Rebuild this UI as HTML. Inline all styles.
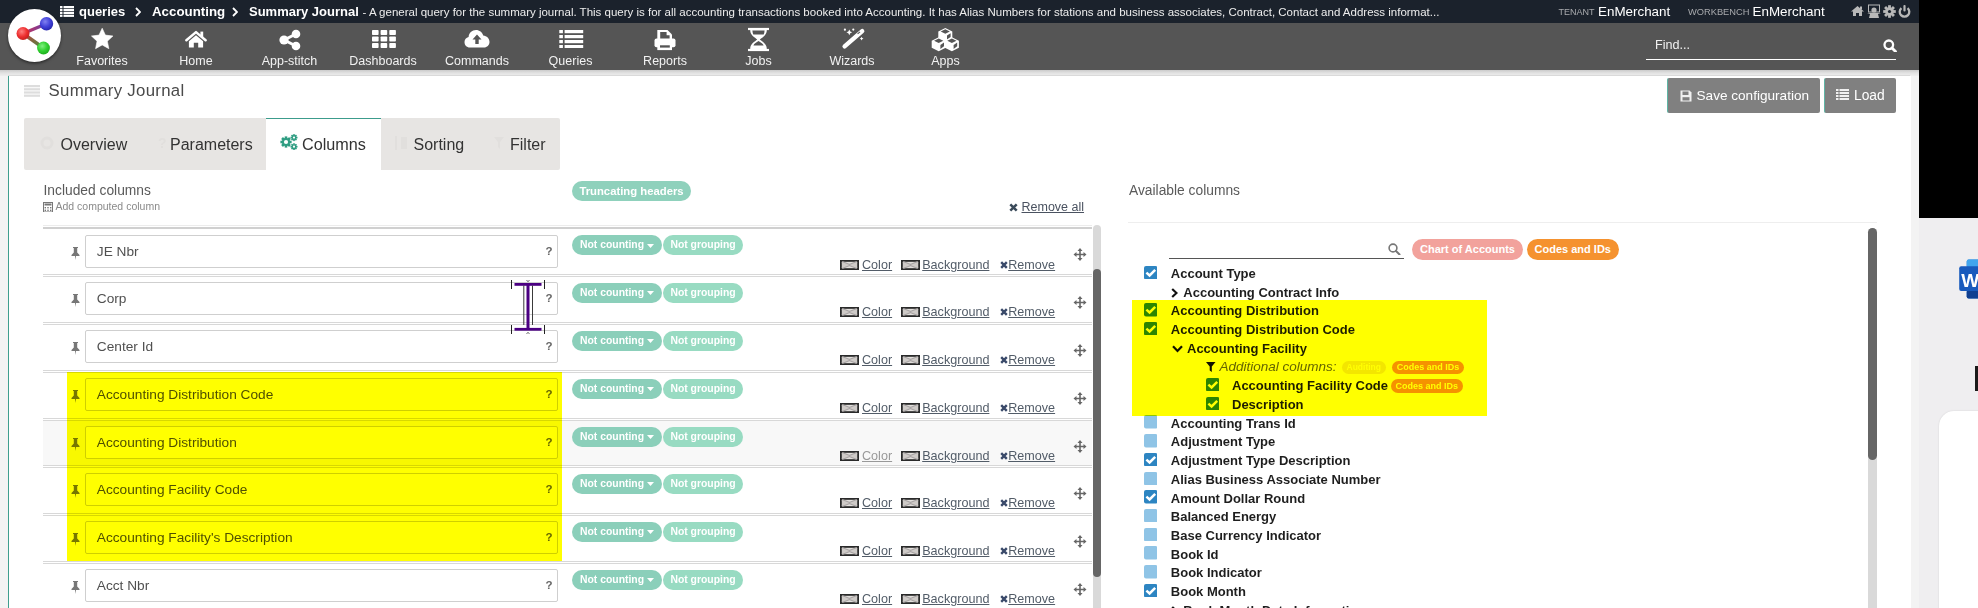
<!DOCTYPE html><html><head><meta charset="utf-8"><style>
html,body{margin:0;padding:0;}
body{width:1978px;height:608px;overflow:hidden;position:relative;background:#efeef0;font-family:"Liberation Sans", sans-serif;}
.t{position:absolute;white-space:pre;}
.r{position:absolute;}
</style></head><body>
<div class="r" style="left:1919px;top:0px;width:59px;height:218px;background:#000"></div>
<svg class="r" style="left:1958px;top:258px;" width="20" height="42" viewBox="0 0 20 42"><rect x="8.7" y="1.4" width="16" height="39" rx="2" fill="#2b7cd3"/><rect x="8.7" y="1.4" width="16" height="8" rx="2" fill="#41a5ee"/><rect x="8.7" y="32" width="16" height="8.4" rx="2" fill="#103f91"/><rect x="1.2" y="8.3" width="22" height="24.7" rx="2" fill="#185abd"/><text x="3.2" y="28.5" font-family="Liberation Sans" font-weight="bold" font-size="19" fill="#fff">W</text></svg>
<div class="r" style="left:1975px;top:366px;width:3px;height:25px;background:#1a1a1a"></div>
<div class="r" style="left:1939px;top:411px;width:60px;height:220px;background:#fff;border-radius:15px 0 0 0;box-shadow:0 0 2px rgba(0,0,0,0.12)"></div>
<div class="r" style="left:0;top:0;width:1919px;height:608px;overflow:hidden;background:#f3f3f3">
<div class="r" style="left:0px;top:0px;width:1919px;height:23px;background:#1b222c"></div>
<div class="r" style="left:0px;top:23px;width:1919px;height:47px;background:#555555"></div>
<div class="r" style="left:0px;top:70px;width:1919px;height:6px;background:linear-gradient(#cbcbcb,#e2e2e2 50%,#eeeeee)"></div>
<div class="r" style="left:8px;top:75px;width:1902px;height:1.2px;background:#dadada"></div>
<div class="r" style="left:8px;top:76px;width:1902px;height:540px;background:#fff;border-left:1px solid #3f9e8e"></div>
<svg class="r" style="left:59.5px;top:6.3px;" width="14" height="11" viewBox="0 0 14 11"><rect x="0" y="0" width="2.5" height="2.2" fill="#fff"/><rect x="3.5" y="0" width="10.5" height="2.2" fill="#fff"/><rect x="0" y="2.9" width="2.5" height="2.2" fill="#fff"/><rect x="3.5" y="2.9" width="10.5" height="2.2" fill="#fff"/><rect x="0" y="5.8" width="2.5" height="2.2" fill="#fff"/><rect x="3.5" y="5.8" width="10.5" height="2.2" fill="#fff"/><rect x="0" y="8.7" width="2.5" height="2.2" fill="#fff"/><rect x="3.5" y="8.7" width="10.5" height="2.2" fill="#fff"/></svg>
<div class="t" style="left:79px;top:5.00px;font-size:13px;line-height:13px;color:#fff;font-weight:bold;font-style:normal;">queries</div>
<svg class="r" style="left:135px;top:7px;" width="6" height="10" viewBox="0 0 6 10"><path d="M1 1 L5 5 L1 9" stroke="#fff" stroke-width="1.8" fill="none"/></svg>
<div class="t" style="left:152px;top:4.74px;font-size:13.3px;line-height:13.3px;color:#fff;font-weight:bold;font-style:normal;">Accounting</div>
<svg class="r" style="left:232px;top:7px;" width="6" height="10" viewBox="0 0 6 10"><path d="M1 1 L5 5 L1 9" stroke="#fff" stroke-width="1.8" fill="none"/></svg>
<div class="t" style="left:249px;top:5.00px;font-size:13px;line-height:13px;color:#fff;font-weight:bold;font-style:normal;">Summary Journal</div>
<div class="t" style="left:362.5px;top:7.07px;font-size:11.5px;line-height:11.5px;color:#ededed;font-weight:normal;font-style:normal;">- A general query for the summary journal. This query is for all accounting transactions booked into Accounting. It has Alias Numbers for stations and business associates, Contract, Contact and Address informat...</div>
<div class="t" style="left:1558.5px;top:8.18px;font-size:9px;line-height:9px;color:#a9abae;font-weight:normal;font-style:normal;">TENANT</div>
<div class="t" style="left:1598px;top:4.66px;font-size:13.4px;line-height:13.4px;color:#fff;font-weight:normal;font-style:normal;">EnMerchant</div>
<div class="t" style="left:1688px;top:7.93px;font-size:9.3px;line-height:9.3px;color:#a9abae;font-weight:normal;font-style:normal;">WORKBENCH</div>
<div class="t" style="left:1752.5px;top:4.66px;font-size:13.4px;line-height:13.4px;color:#fff;font-weight:normal;font-style:normal;">EnMerchant</div>
<svg class="r" style="left:1851px;top:6px;" width="13" height="10" viewBox="0 0 13 10"><path d="M6.5 0 L13 5.5 L11 5.5 L11 10 L8 10 L8 7 L5 7 L5 10 L2 10 L2 5.5 L0 5.5 Z" fill="#b8b8b8"/><rect x="9" y="0.5" width="2" height="3" fill="#b8b8b8"/></svg>
<svg class="r" style="left:1867px;top:4px;" width="14" height="14" viewBox="0 0 14 14"><rect x="1.5" y="1" width="11" height="7" fill="none" stroke="#b8b8b8" stroke-width="1"/><circle cx="7" cy="6" r="2.6" fill="#b8b8b8"/><path d="M0 9 L14 9 L11 10 L3 10Z" fill="#b8b8b8"/><path d="M2 14 L3 10 L11 10 L12 14Z" fill="#b8b8b8"/></svg>
<svg class="r" style="left:1883px;top:5px;" width="13" height="13" viewBox="0 0 13 13"><g transform="translate(6.5,6.5)"><rect x="-1.4" y="-6.3" width="2.8" height="3" fill="#b8b8b8" transform="rotate(0)"/><rect x="-1.4" y="-6.3" width="2.8" height="3" fill="#b8b8b8" transform="rotate(45)"/><rect x="-1.4" y="-6.3" width="2.8" height="3" fill="#b8b8b8" transform="rotate(90)"/><rect x="-1.4" y="-6.3" width="2.8" height="3" fill="#b8b8b8" transform="rotate(135)"/><rect x="-1.4" y="-6.3" width="2.8" height="3" fill="#b8b8b8" transform="rotate(180)"/><rect x="-1.4" y="-6.3" width="2.8" height="3" fill="#b8b8b8" transform="rotate(225)"/><rect x="-1.4" y="-6.3" width="2.8" height="3" fill="#b8b8b8" transform="rotate(270)"/><rect x="-1.4" y="-6.3" width="2.8" height="3" fill="#b8b8b8" transform="rotate(315)"/><circle r="4.2" fill="#b8b8b8"/><circle r="1.6" fill="#1b222c"/></g></svg>
<svg class="r" style="left:1898px;top:5px;" width="13" height="13" viewBox="0 0 13 13"><path d="M3.4 3.2 A4.8 4.8 0 1 0 9.6 3.2" fill="none" stroke="#b8b8b8" stroke-width="2.3"/><rect x="5.4" y="0" width="2.2" height="6.5" rx="1" fill="#b8b8b8"/></svg>
<div class="t" style="left:52px;width:100px;text-align:center;top:54.72px;font-size:12.5px;line-height:12.5px;color:#f2f2f2">Favorites</div>
<div class="t" style="left:146px;width:100px;text-align:center;top:54.72px;font-size:12.5px;line-height:12.5px;color:#f2f2f2">Home</div>
<div class="t" style="left:239.5px;width:100px;text-align:center;top:54.72px;font-size:12.5px;line-height:12.5px;color:#f2f2f2">App-stitch</div>
<div class="t" style="left:333px;width:100px;text-align:center;top:54.72px;font-size:12.5px;line-height:12.5px;color:#f2f2f2">Dashboards</div>
<div class="t" style="left:427px;width:100px;text-align:center;top:54.72px;font-size:12.5px;line-height:12.5px;color:#f2f2f2">Commands</div>
<div class="t" style="left:520.5px;width:100px;text-align:center;top:54.72px;font-size:12.5px;line-height:12.5px;color:#f2f2f2">Queries</div>
<div class="t" style="left:615px;width:100px;text-align:center;top:54.72px;font-size:12.5px;line-height:12.5px;color:#f2f2f2">Reports</div>
<div class="t" style="left:708.5px;width:100px;text-align:center;top:54.72px;font-size:12.5px;line-height:12.5px;color:#f2f2f2">Jobs</div>
<div class="t" style="left:802px;width:100px;text-align:center;top:54.72px;font-size:12.5px;line-height:12.5px;color:#f2f2f2">Wizards</div>
<div class="t" style="left:895.5px;width:100px;text-align:center;top:54.72px;font-size:12.5px;line-height:12.5px;color:#f2f2f2">Apps</div>
<svg class="r" style="left:91px;top:28px;" width="23" height="22" viewBox="0 0 23 22"><path d="M11.20 0.22 L14.38 7.12 L21.93 8.01 L16.35 13.17 L17.83 20.63 L11.20 16.91 L4.57 20.63 L6.05 13.17 L0.47 8.01 L8.02 7.12Z" fill="#fff" stroke="#fff" stroke-width="0.6" stroke-linejoin="round"/></svg>
<svg class="r" style="left:185px;top:30px;" width="22" height="18" viewBox="0 0 22 18"><path d="M1.4 10.2 L11 2.1 L20.6 10.2" stroke="#fff" stroke-width="2.5" stroke-linecap="round" stroke-linejoin="round" fill="none"/><rect x="15.4" y="1.6" width="2.8" height="5.5" fill="#fff"/><path d="M3.9 11.3 L11 5.2 L18.1 11.3 L18.1 17.6 L13.2 17.6 L13.2 12.7 L8.8 12.7 L8.8 17.6 L3.9 17.6 Z" fill="#fff"/></svg>
<svg class="r" style="left:279px;top:29px;" width="22" height="22" viewBox="0 0 22 22"><circle cx="17" cy="5" r="4.3" fill="#fff"/><circle cx="5" cy="11" r="4.6" fill="#fff"/><circle cx="17" cy="17" r="4.3" fill="#fff"/><path d="M5 11 L17 5 M5 11 L17 17" stroke="#fff" stroke-width="3"/></svg>
<svg class="r" style="left:372px;top:30px;" width="24" height="18" viewBox="0 0 24 18"><rect x="0" y="0" width="6.6" height="5" rx="0.8" fill="#fff"/><rect x="0" y="6.5" width="6.6" height="5" rx="0.8" fill="#fff"/><rect x="0" y="13" width="6.6" height="5" rx="0.8" fill="#fff"/><rect x="8.6" y="0" width="6.6" height="5" rx="0.8" fill="#fff"/><rect x="8.6" y="6.5" width="6.6" height="5" rx="0.8" fill="#fff"/><rect x="8.6" y="13" width="6.6" height="5" rx="0.8" fill="#fff"/><rect x="17.3" y="0" width="6.6" height="5" rx="0.8" fill="#fff"/><rect x="17.3" y="6.5" width="6.6" height="5" rx="0.8" fill="#fff"/><rect x="17.3" y="13" width="6.6" height="5" rx="0.8" fill="#fff"/></svg>
<svg class="r" style="left:464px;top:29px;" width="26" height="19" viewBox="0 0 26 19"><path d="M6 18.5 C2.5 18.5 0.5 16 0.5 13 C0.5 10.5 2.2 8.5 4.6 8 C4.8 4 8 1 12 1 C15.5 1 18.3 3.3 19.2 6.5 C22.8 6.8 25.5 9.5 25.5 13 C25.5 16 23 18.5 20 18.5 Z" fill="#fff"/><path d="M13 5.5 L8.5 10.5 L11.3 10.5 L11.3 15 L14.7 15 L14.7 10.5 L17.5 10.5 Z" fill="#555"/></svg>
<svg class="r" style="left:559px;top:30px;" width="25" height="18" viewBox="0 0 25 18"><rect x="0.3" y="0" width="3.6" height="3.2" fill="#fff"/><rect x="5.6" y="0" width="18.6" height="3.2" fill="#fff"/><rect x="0.3" y="5" width="3.6" height="3.2" fill="#fff"/><rect x="5.6" y="5" width="18.6" height="3.2" fill="#fff"/><rect x="0.3" y="10" width="3.6" height="3.2" fill="#fff"/><rect x="5.6" y="10" width="18.6" height="3.2" fill="#fff"/><rect x="0.3" y="15" width="3.6" height="3.2" fill="#fff"/><rect x="5.6" y="15" width="18.6" height="3.2" fill="#fff"/></svg>
<svg class="r" style="left:654px;top:30px;" width="22" height="21" viewBox="0 0 22 21"><path d="M3.3 0 L13.5 0 L18 4.5 L18 9.5 L3.3 9.5 Z" fill="#fff"/><path d="M6.2 2.1 L12.6 2.1 L12.6 5.2 L15.6 5.2 L15.6 9.5 L6.2 9.5 Z" fill="#555"/><rect x="0.5" y="8.6" width="21" height="8.6" rx="2" fill="#fff"/><rect x="3.3" y="14.5" width="14.7" height="5.6" fill="#fff"/><rect x="6" y="15.3" width="9.8" height="2.3" fill="#555"/></svg>
<svg class="r" style="left:747px;top:27px;" width="23" height="25" viewBox="0 0 23 25"><rect x="1" y="0.9" width="21" height="2.2" fill="#fff"/><rect x="1" y="21.9" width="21" height="2.2" fill="#fff"/><path d="M3.2 3 L19.8 3 C19.8 8.5 15.2 10.3 12.8 12.5 C15.2 14.7 19.8 16.5 19.8 22 L3.2 22 C3.2 16.5 7.8 14.7 10.2 12.5 C7.8 10.3 3.2 8.5 3.2 3 Z" fill="#fff"/><path d="M5.4 3.4 L17.6 3.4 C17.5 5 17.2 6.2 16.7 7.4 L6.3 7.4 C5.8 6.2 5.5 5 5.4 3.4Z" fill="#555"/><path d="M11.5 14 C13.5 15.2 15.8 16.3 16.6 18.6 L6.4 18.6 C7.2 16.3 9.5 15.2 11.5 14Z" fill="#555"/></svg>
<svg class="r" style="left:835px;top:24px;" width="40" height="30" viewBox="0 0 40 30"><path d="M9.6 22.4 L27.2 7.1" stroke="#fff" stroke-width="4.4" stroke-linecap="round"/><path d="M22.6 9.9 L25.0 7.8" stroke="#555" stroke-width="1.1"/><path d="M14.3 5.4 Q14.8 7.800000000000001 17.2 8.3 Q14.8 8.8 14.3 11.200000000000001 Q13.8 8.8 11.4 8.3 Q13.8 7.800000000000001 14.3 5.4Z" fill="#fff"/><path d="M26.6 12.7 Q26.950000000000003 14.25 28.5 14.6 Q26.950000000000003 14.95 26.6 16.5 Q26.25 14.95 24.700000000000003 14.6 Q26.25 14.25 26.6 12.7Z" fill="#fff"/><circle cx="9.9" cy="5.7" r="1.1" fill="#fff"/><circle cx="18.3" cy="5.6" r="1.1" fill="#fff"/></svg>
<svg class="r" style="left:925px;top:24px;" width="40" height="30" viewBox="0 0 40 30"><path d="M20.3 4.0 L27.3 7.5 L27.3 14.5 L20.3 18.0 L13.3 14.5 L13.3 7.5 Z" fill="#fff"/><path d="M20.3 5.3 L24.900000000000002 7.5 L20.3 9.7 L15.700000000000001 7.5 Z" fill="#555"/><path d="M22.0 11.6 L25.6 9.3 L25.6 12.9 L22.0 15.6 Z" fill="#555"/><path d="M13.7 13.3 L20.7 16.8 L20.7 23.8 L13.7 27.3 L6.699999999999999 23.8 L6.699999999999999 16.8 Z" fill="#fff"/><path d="M13.7 14.600000000000001 L18.3 16.8 L13.7 19.0 L9.1 16.8 Z" fill="#555"/><path d="M15.399999999999999 20.900000000000002 L19.0 18.6 L19.0 22.2 L15.399999999999999 24.900000000000002 Z" fill="#555"/><path d="M26.9 13.3 L33.9 16.8 L33.9 23.8 L26.9 27.3 L19.9 23.8 L19.9 16.8 Z" fill="#fff"/><path d="M26.9 14.600000000000001 L31.5 16.8 L26.9 19.0 L22.299999999999997 16.8 Z" fill="#555"/><path d="M28.599999999999998 20.900000000000002 L32.199999999999996 18.6 L32.199999999999996 22.2 L28.599999999999998 24.900000000000002 Z" fill="#555"/></svg>
<div class="t" style="left:1655px;top:39.33px;font-size:12.6px;line-height:12.6px;color:#f2f2f2;font-weight:normal;font-style:normal;">Find...</div>
<div class="r" style="left:1646px;top:59px;width:250px;height:1px;background:#fff"></div>
<svg class="r" style="left:1883px;top:39px;" width="14" height="13" viewBox="0 0 14 13"><circle cx="5.8" cy="5.8" r="4.3" fill="none" stroke="#fff" stroke-width="2.3"/><path d="M9 9 L12.5 12.5" stroke="#fff" stroke-width="2.8" stroke-linecap="round"/></svg>
<div class="r" style="left:8px;top:8.5px;width:53px;height:53px;border-radius:50%;background:#fff;box-shadow:0 1.5px 3px rgba(0,0,0,0.5)"></div>
<svg class="r" style="left:14px;top:15px;" width="44" height="44" viewBox="0 0 44 44"><defs><radialGradient id="gr" cx="40%" cy="35%" r="65%"><stop offset="0" stop-color="#ff8080"/><stop offset="0.6" stop-color="#ee3030"/><stop offset="1" stop-color="#c82020"/></radialGradient><radialGradient id="gb" cx="40%" cy="35%" r="65%"><stop offset="0" stop-color="#8080f0"/><stop offset="0.6" stop-color="#4040d8"/><stop offset="1" stop-color="#2828b0"/></radialGradient><radialGradient id="gg" cx="40%" cy="35%" r="65%"><stop offset="0" stop-color="#80f080"/><stop offset="0.6" stop-color="#30d030"/><stop offset="1" stop-color="#20b020"/></radialGradient><linearGradient id="l1" x1="0" y1="0" x2="1" y2="0"><stop offset="0" stop-color="#d03050"/><stop offset="1" stop-color="#6040b0"/></linearGradient><linearGradient id="l2" x1="0" y1="0" x2="1" y2="1"><stop offset="0" stop-color="#c04040"/><stop offset="1" stop-color="#409040"/></linearGradient><filter id="bl"><feGaussianBlur stdDeviation="0.45"/></filter></defs><g filter="url(#bl)"><path d="M9 18.5 L32.5 8.7" stroke="url(#l1)" stroke-width="3.4"/><path d="M9 18.5 L29.5 33" stroke="url(#l2)" stroke-width="3.4"/><circle cx="9" cy="18.5" r="6.5" fill="url(#gr)"/><circle cx="32.5" cy="8.7" r="6.7" fill="url(#gb)"/><circle cx="29.5" cy="33" r="6.4" fill="url(#gg)"/></g></svg>
<svg class="r" style="left:24px;top:85px;" width="16" height="12" viewBox="0 0 16 12"><rect x="0" y="0" width="16" height="2.2" fill="#dddddd"/><rect x="0" y="3.2" width="16" height="2.2" fill="#dddddd"/><rect x="0" y="6.4" width="16" height="2.2" fill="#dddddd"/><rect x="0" y="9.6" width="16" height="2.2" fill="#dddddd"/></svg>
<div class="t" style="left:48.5px;top:83.28px;font-size:16.8px;line-height:16.8px;color:#4a4a4a;font-weight:normal;font-style:normal;letter-spacing:0.3px;">Summary Journal</div>
<div class="r" style="left:1667px;top:78px;width:153px;height:35px;background:#808080;border-left:1px solid #5fb5a5;border-radius:2px;box-sizing:border-box"></div>
<svg class="r" style="left:1680px;top:90px;" width="12" height="12" viewBox="0 0 12 12"><path d="M0.5 0.5 L9.5 0.5 L11.5 2.5 L11.5 11.5 L0.5 11.5 Z" fill="#f0f0f0"/><rect x="2.5" y="1.5" width="6" height="3.5" fill="#808080"/><rect x="2.5" y="7.2" width="7" height="3.3" fill="#808080"/></svg>
<div class="t" style="left:1696.5px;top:88.99px;font-size:13.6px;line-height:13.6px;color:#fff;font-weight:normal;font-style:normal;">Save configuration</div>
<div class="r" style="left:1823.5px;top:78px;width:72.5px;height:35px;background:#808080;border-left:1px solid #5fb5a5;border-radius:2px;box-sizing:border-box"></div>
<svg class="r" style="left:1836px;top:89px;" width="13" height="11" viewBox="0 0 13 11"><rect x="0" y="0" width="2.5" height="2" fill="#f0f0f0"/><rect x="3.5" y="0" width="9.5" height="2" fill="#f0f0f0"/><rect x="0" y="3" width="2.5" height="2" fill="#f0f0f0"/><rect x="3.5" y="3" width="9.5" height="2" fill="#f0f0f0"/><rect x="0" y="6" width="2.5" height="2" fill="#f0f0f0"/><rect x="3.5" y="6" width="9.5" height="2" fill="#f0f0f0"/><rect x="0" y="9" width="2.5" height="2" fill="#f0f0f0"/><rect x="3.5" y="9" width="9.5" height="2" fill="#f0f0f0"/></svg>
<div class="t" style="left:1854px;top:88.82px;font-size:13.8px;line-height:13.8px;color:#fff;font-weight:normal;font-style:normal;">Load</div>
<div class="r" style="left:24px;top:118px;width:536px;height:52px;background:#e7e5e3;border-radius:2px"></div>
<div class="r" style="left:265.5px;top:118px;width:115px;height:52px;background:#fff;border-top:1.5px solid #3c9c8c;box-sizing:border-box"></div>
<div class="t" style="left:60.5px;top:136.76px;font-size:16px;line-height:16px;color:#333;font-weight:normal;font-style:normal;">Overview</div>
<div class="t" style="left:170px;top:136.76px;font-size:16px;line-height:16px;color:#333;font-weight:normal;font-style:normal;">Parameters</div>
<div class="t" style="left:302px;top:136.19px;font-size:16.2px;line-height:16.2px;color:#333;font-weight:normal;font-style:normal;">Columns</div>
<div class="t" style="left:413.5px;top:136.76px;font-size:16px;line-height:16px;color:#333;font-weight:normal;font-style:normal;">Sorting</div>
<div class="t" style="left:510px;top:136.76px;font-size:16px;line-height:16px;color:#333;font-weight:normal;font-style:normal;">Filter</div>
<svg class="r" style="left:40px;top:135px;" width="16" height="16" viewBox="0 0 16 16"><circle cx="7" cy="8" r="5" fill="none" stroke="#e1dfdd" stroke-width="3"/></svg>
<svg class="r" style="left:158px;top:136px;" width="8" height="14" viewBox="0 0 8 14"><text x="0" y="12" font-family="Liberation Sans" font-weight="bold" font-size="14" fill="#e1dfdd">?</text></svg>
<svg class="r" style="left:394px;top:135px;" width="14" height="16" viewBox="0 0 14 16"><rect x="1" y="1" width="2" height="14" fill="#e1dfdd"/><rect x="7" y="2" width="6" height="12" fill="#e1dfdd"/></svg>
<svg class="r" style="left:494px;top:137px;" width="10" height="12" viewBox="0 0 10 12"><path d="M0 0 L10 0 L6 5 L6 12 L4 10 L4 5Z" fill="#e1dfdd"/></svg>
<svg class="r" style="left:280px;top:134px;" width="18" height="16" viewBox="0 0 18 16"><g transform="translate(6,8)"><rect x="-1.3" y="-5.6" width="2.6" height="2.6" fill="#2f9d82" transform="rotate(0)"/><rect x="-1.3" y="-5.6" width="2.6" height="2.6" fill="#2f9d82" transform="rotate(45)"/><rect x="-1.3" y="-5.6" width="2.6" height="2.6" fill="#2f9d82" transform="rotate(90)"/><rect x="-1.3" y="-5.6" width="2.6" height="2.6" fill="#2f9d82" transform="rotate(135)"/><rect x="-1.3" y="-5.6" width="2.6" height="2.6" fill="#2f9d82" transform="rotate(180)"/><rect x="-1.3" y="-5.6" width="2.6" height="2.6" fill="#2f9d82" transform="rotate(225)"/><rect x="-1.3" y="-5.6" width="2.6" height="2.6" fill="#2f9d82" transform="rotate(270)"/><rect x="-1.3" y="-5.6" width="2.6" height="2.6" fill="#2f9d82" transform="rotate(315)"/><circle r="4" fill="#2f9d82"/><circle r="2.1" fill="#fff"/></g><g transform="translate(14,3.6)"><rect x="-0.8" y="-3.5" width="1.6" height="1.6" fill="#2f9d82" transform="rotate(0)"/><rect x="-0.8" y="-3.5" width="1.6" height="1.6" fill="#2f9d82" transform="rotate(45)"/><rect x="-0.8" y="-3.5" width="1.6" height="1.6" fill="#2f9d82" transform="rotate(90)"/><rect x="-0.8" y="-3.5" width="1.6" height="1.6" fill="#2f9d82" transform="rotate(135)"/><rect x="-0.8" y="-3.5" width="1.6" height="1.6" fill="#2f9d82" transform="rotate(180)"/><rect x="-0.8" y="-3.5" width="1.6" height="1.6" fill="#2f9d82" transform="rotate(225)"/><rect x="-0.8" y="-3.5" width="1.6" height="1.6" fill="#2f9d82" transform="rotate(270)"/><rect x="-0.8" y="-3.5" width="1.6" height="1.6" fill="#2f9d82" transform="rotate(315)"/><circle r="2.5" fill="#2f9d82"/><circle r="1.1" fill="#fff"/></g><g transform="translate(14,12.7)"><rect x="-0.8" y="-3.5" width="1.6" height="1.6" fill="#2f9d82" transform="rotate(0)"/><rect x="-0.8" y="-3.5" width="1.6" height="1.6" fill="#2f9d82" transform="rotate(45)"/><rect x="-0.8" y="-3.5" width="1.6" height="1.6" fill="#2f9d82" transform="rotate(90)"/><rect x="-0.8" y="-3.5" width="1.6" height="1.6" fill="#2f9d82" transform="rotate(135)"/><rect x="-0.8" y="-3.5" width="1.6" height="1.6" fill="#2f9d82" transform="rotate(180)"/><rect x="-0.8" y="-3.5" width="1.6" height="1.6" fill="#2f9d82" transform="rotate(225)"/><rect x="-0.8" y="-3.5" width="1.6" height="1.6" fill="#2f9d82" transform="rotate(270)"/><rect x="-0.8" y="-3.5" width="1.6" height="1.6" fill="#2f9d82" transform="rotate(315)"/><circle r="2.5" fill="#2f9d82"/><circle r="1.1" fill="#fff"/></g></svg>
<div class="t" style="left:43.5px;top:184.32px;font-size:13.8px;line-height:13.8px;color:#5a5a5a;font-weight:normal;font-style:normal;">Included columns</div>
<svg class="r" style="left:43px;top:201.5px;" width="10" height="10" viewBox="0 0 10 10"><rect x="0.5" y="0.5" width="9" height="9.5" fill="none" stroke="#777" stroke-width="1"/><rect x="1.5" y="1.5" width="7" height="2" fill="#777"/><rect x="1.6" y="5" width="1.4" height="1.4" fill="#777"/><rect x="1.6" y="7.6" width="1.4" height="1.4" fill="#777"/><rect x="4.3" y="5" width="1.4" height="1.4" fill="#777"/><rect x="4.3" y="7.6" width="1.4" height="1.4" fill="#777"/><rect x="7" y="5" width="1.4" height="1.4" fill="#777"/><rect x="7" y="7.6" width="1.4" height="1.4" fill="#777"/></svg>
<div class="t" style="left:55.5px;top:200.61px;font-size:10.5px;line-height:10.5px;color:#8a8a8a;font-weight:normal;font-style:normal;">Add computed column</div>
<div class="r" style="left:572px;top:181px;width:119px;height:20px;border-radius:10px;background:#8fd1bc;color:#fff;font-weight:bold;font-size:11.3px;line-height:20px;text-align:center">Truncating headers</div>
<svg class="r" style="left:1008.5px;top:202.5px;" width="9" height="9" viewBox="0 0 9 9"><path d="M1.3 1.3 L7.7 7.7 M7.7 1.3 L1.3 7.7" stroke="#3a4a5a" stroke-width="2.5"/></svg>
<div class="t" style="left:1021.5px;top:201.22px;font-size:12.5px;line-height:12.5px;color:#4a5260;font-weight:normal;font-style:normal;text-decoration:underline;text-underline-offset:1px;">Remove all</div>
<div class="r" style="left:43px;top:225px;width:1049px;height:1px;background:#ececec"></div>
<div class="r" style="left:43px;top:227px;width:1049px;height:2px;background:#d0d0d0"></div>
<svg class="r" style="left:71px;top:246.6px;" width="9" height="13" viewBox="0 0 9 13"><path d="M2 0 L7 0 L7 1 L6.2 1 L6.2 5.5 L8.5 8 L8.5 9 L5 9 L4.5 13 L4 9 L0.5 9 L0.5 8 L2.8 5.5 L2.8 1 L2 1Z" fill="#777"/></svg>
<div class="r" style="left:85px;top:234.6px;width:473px;height:33px;background:#fff;border:1px solid #cfcfcf;border-radius:2px;box-sizing:border-box"></div>
<div class="t" style="left:96.8px;top:244.80px;font-size:13.7px;line-height:13.7px;color:#505050;font-weight:normal;font-style:normal;">JE Nbr</div>
<div class="t" style="left:545.5px;top:245.67px;font-size:11.5px;line-height:11.5px;color:#666;font-weight:bold;font-style:normal;">?</div>
<div class="r" style="left:572px;top:235.1px;width:90px;height:20px;border-radius:10px;background:#8bcfba;color:#fff;font-weight:bold;font-size:10.4px;line-height:20px;text-indent:8px">Not counting</div>
<svg class="r" style="left:647px;top:243.6px;" width="7" height="4" viewBox="0 0 7 4"><path d="M0 0 L7 0 L3.5 4Z" fill="#fff"/></svg>
<div class="r" style="left:663px;top:235.1px;width:80px;height:20px;border-radius:10px;background:#98dbc2;color:#fff;font-weight:bold;font-size:10.4px;line-height:20px;text-align:center">Not grouping</div>
<svg class="r" style="left:840px;top:259.6px;" width="19" height="10" viewBox="0 0 19 10"><rect x="0.9" y="0.9" width="17.2" height="8.2" fill="#e2dfdc" stroke="#2a2a2a" stroke-width="1.8"/><path d="M2 2 L17 8 M17 2 L2 8" stroke="#a8a4a4" stroke-width="2.4"/><path d="M2 2 L2 8 L9.5 5Z M17 2 L17 8 L9.5 5Z" fill="#cfcbc8"/></svg>
<svg class="r" style="left:900.5px;top:259.6px;" width="19" height="10" viewBox="0 0 19 10"><rect x="0.9" y="0.9" width="17.2" height="8.2" fill="#e2dfdc" stroke="#2a2a2a" stroke-width="1.8"/><path d="M2 2 L17 8 M17 2 L2 8" stroke="#a8a4a4" stroke-width="2.4"/><path d="M2 2 L2 8 L9.5 5Z M17 2 L17 8 L9.5 5Z" fill="#cfcbc8"/></svg>
<div class="t" style="left:862px;top:258.73px;font-size:12.6px;line-height:12.6px;color:#525c68;font-weight:normal;font-style:normal;text-decoration:underline;text-underline-offset:1px;">Color</div>
<div class="t" style="left:922.2px;top:258.73px;font-size:12.6px;line-height:12.6px;color:#525c68;font-weight:normal;font-style:normal;text-decoration:underline;text-underline-offset:1px;">Background</div>
<svg class="r" style="left:999.5px;top:260.7px;" width="8" height="8" viewBox="0 0 8 8"><path d="M1.2 1.2 L6.8 6.8 M6.8 1.2 L1.2 6.8" stroke="#3a4a6a" stroke-width="2.4"/></svg>
<div class="t" style="left:1008.2px;top:258.73px;font-size:12.6px;line-height:12.6px;color:#525c68;font-weight:normal;font-style:normal;text-decoration:underline;text-underline-offset:1px;">Remove</div>
<svg class="r" style="left:1073px;top:248.4px;" width="14" height="13" viewBox="0 0 14 13"><path d="M7 0 L9.5 3 L7.8 3 L7.8 5.7 L10.5 5.7 L10.5 4 L13.5 6.5 L10.5 9 L10.5 7.3 L7.8 7.3 L7.8 10 L9.5 10 L7 13 L4.5 10 L6.2 10 L6.2 7.3 L3.5 7.3 L3.5 9 L0.5 6.5 L3.5 4 L3.5 5.7 L6.2 5.7 L6.2 3 L4.5 3Z" fill="#666"/></svg>
<div class="r" style="left:43px;top:274px;width:1049px;height:1px;background:#d8d8d8"></div>
<div class="r" style="left:43px;top:276px;width:1049px;height:1px;background:#d8d8d8"></div>
<svg class="r" style="left:71px;top:294px;" width="9" height="13" viewBox="0 0 9 13"><path d="M2 0 L7 0 L7 1 L6.2 1 L6.2 5.5 L8.5 8 L8.5 9 L5 9 L4.5 13 L4 9 L0.5 9 L0.5 8 L2.8 5.5 L2.8 1 L2 1Z" fill="#777"/></svg>
<div class="r" style="left:85px;top:282px;width:473px;height:33px;background:#fff;border:1px solid #cfcfcf;border-radius:2px;box-sizing:border-box"></div>
<div class="t" style="left:96.8px;top:292.20px;font-size:13.7px;line-height:13.7px;color:#505050;font-weight:normal;font-style:normal;">Corp</div>
<div class="t" style="left:545.5px;top:293.07px;font-size:11.5px;line-height:11.5px;color:#666;font-weight:bold;font-style:normal;">?</div>
<div class="r" style="left:572px;top:282.5px;width:90px;height:20px;border-radius:10px;background:#8bcfba;color:#fff;font-weight:bold;font-size:10.4px;line-height:20px;text-indent:8px">Not counting</div>
<svg class="r" style="left:647px;top:291px;" width="7" height="4" viewBox="0 0 7 4"><path d="M0 0 L7 0 L3.5 4Z" fill="#fff"/></svg>
<div class="r" style="left:663px;top:282.5px;width:80px;height:20px;border-radius:10px;background:#98dbc2;color:#fff;font-weight:bold;font-size:10.4px;line-height:20px;text-align:center">Not grouping</div>
<svg class="r" style="left:840px;top:307px;" width="19" height="10" viewBox="0 0 19 10"><rect x="0.9" y="0.9" width="17.2" height="8.2" fill="#e2dfdc" stroke="#2a2a2a" stroke-width="1.8"/><path d="M2 2 L17 8 M17 2 L2 8" stroke="#a8a4a4" stroke-width="2.4"/><path d="M2 2 L2 8 L9.5 5Z M17 2 L17 8 L9.5 5Z" fill="#cfcbc8"/></svg>
<svg class="r" style="left:900.5px;top:307px;" width="19" height="10" viewBox="0 0 19 10"><rect x="0.9" y="0.9" width="17.2" height="8.2" fill="#e2dfdc" stroke="#2a2a2a" stroke-width="1.8"/><path d="M2 2 L17 8 M17 2 L2 8" stroke="#a8a4a4" stroke-width="2.4"/><path d="M2 2 L2 8 L9.5 5Z M17 2 L17 8 L9.5 5Z" fill="#cfcbc8"/></svg>
<div class="t" style="left:862px;top:306.13px;font-size:12.6px;line-height:12.6px;color:#525c68;font-weight:normal;font-style:normal;text-decoration:underline;text-underline-offset:1px;">Color</div>
<div class="t" style="left:922.2px;top:306.13px;font-size:12.6px;line-height:12.6px;color:#525c68;font-weight:normal;font-style:normal;text-decoration:underline;text-underline-offset:1px;">Background</div>
<svg class="r" style="left:999.5px;top:308.1px;" width="8" height="8" viewBox="0 0 8 8"><path d="M1.2 1.2 L6.8 6.8 M6.8 1.2 L1.2 6.8" stroke="#3a4a6a" stroke-width="2.4"/></svg>
<div class="t" style="left:1008.2px;top:306.13px;font-size:12.6px;line-height:12.6px;color:#525c68;font-weight:normal;font-style:normal;text-decoration:underline;text-underline-offset:1px;">Remove</div>
<svg class="r" style="left:1073px;top:295.8px;" width="14" height="13" viewBox="0 0 14 13"><path d="M7 0 L9.5 3 L7.8 3 L7.8 5.7 L10.5 5.7 L10.5 4 L13.5 6.5 L10.5 9 L10.5 7.3 L7.8 7.3 L7.8 10 L9.5 10 L7 13 L4.5 10 L6.2 10 L6.2 7.3 L3.5 7.3 L3.5 9 L0.5 6.5 L3.5 4 L3.5 5.7 L6.2 5.7 L6.2 3 L4.5 3Z" fill="#666"/></svg>
<div class="r" style="left:43px;top:322px;width:1049px;height:1px;background:#d8d8d8"></div>
<div class="r" style="left:43px;top:324px;width:1049px;height:1px;background:#d8d8d8"></div>
<svg class="r" style="left:71px;top:342px;" width="9" height="13" viewBox="0 0 9 13"><path d="M2 0 L7 0 L7 1 L6.2 1 L6.2 5.5 L8.5 8 L8.5 9 L5 9 L4.5 13 L4 9 L0.5 9 L0.5 8 L2.8 5.5 L2.8 1 L2 1Z" fill="#777"/></svg>
<div class="r" style="left:85px;top:330px;width:473px;height:33px;background:#fff;border:1px solid #cfcfcf;border-radius:2px;box-sizing:border-box"></div>
<div class="t" style="left:96.8px;top:340.20px;font-size:13.7px;line-height:13.7px;color:#505050;font-weight:normal;font-style:normal;">Center Id</div>
<div class="t" style="left:545.5px;top:341.07px;font-size:11.5px;line-height:11.5px;color:#666;font-weight:bold;font-style:normal;">?</div>
<div class="r" style="left:572px;top:330.5px;width:90px;height:20px;border-radius:10px;background:#8bcfba;color:#fff;font-weight:bold;font-size:10.4px;line-height:20px;text-indent:8px">Not counting</div>
<svg class="r" style="left:647px;top:339px;" width="7" height="4" viewBox="0 0 7 4"><path d="M0 0 L7 0 L3.5 4Z" fill="#fff"/></svg>
<div class="r" style="left:663px;top:330.5px;width:80px;height:20px;border-radius:10px;background:#98dbc2;color:#fff;font-weight:bold;font-size:10.4px;line-height:20px;text-align:center">Not grouping</div>
<svg class="r" style="left:840px;top:355px;" width="19" height="10" viewBox="0 0 19 10"><rect x="0.9" y="0.9" width="17.2" height="8.2" fill="#e2dfdc" stroke="#2a2a2a" stroke-width="1.8"/><path d="M2 2 L17 8 M17 2 L2 8" stroke="#a8a4a4" stroke-width="2.4"/><path d="M2 2 L2 8 L9.5 5Z M17 2 L17 8 L9.5 5Z" fill="#cfcbc8"/></svg>
<svg class="r" style="left:900.5px;top:355px;" width="19" height="10" viewBox="0 0 19 10"><rect x="0.9" y="0.9" width="17.2" height="8.2" fill="#e2dfdc" stroke="#2a2a2a" stroke-width="1.8"/><path d="M2 2 L17 8 M17 2 L2 8" stroke="#a8a4a4" stroke-width="2.4"/><path d="M2 2 L2 8 L9.5 5Z M17 2 L17 8 L9.5 5Z" fill="#cfcbc8"/></svg>
<div class="t" style="left:862px;top:354.13px;font-size:12.6px;line-height:12.6px;color:#525c68;font-weight:normal;font-style:normal;text-decoration:underline;text-underline-offset:1px;">Color</div>
<div class="t" style="left:922.2px;top:354.13px;font-size:12.6px;line-height:12.6px;color:#525c68;font-weight:normal;font-style:normal;text-decoration:underline;text-underline-offset:1px;">Background</div>
<svg class="r" style="left:999.5px;top:356.1px;" width="8" height="8" viewBox="0 0 8 8"><path d="M1.2 1.2 L6.8 6.8 M6.8 1.2 L1.2 6.8" stroke="#3a4a6a" stroke-width="2.4"/></svg>
<div class="t" style="left:1008.2px;top:354.13px;font-size:12.6px;line-height:12.6px;color:#525c68;font-weight:normal;font-style:normal;text-decoration:underline;text-underline-offset:1px;">Remove</div>
<svg class="r" style="left:1073px;top:343.8px;" width="14" height="13" viewBox="0 0 14 13"><path d="M7 0 L9.5 3 L7.8 3 L7.8 5.7 L10.5 5.7 L10.5 4 L13.5 6.5 L10.5 9 L10.5 7.3 L7.8 7.3 L7.8 10 L9.5 10 L7 13 L4.5 10 L6.2 10 L6.2 7.3 L3.5 7.3 L3.5 9 L0.5 6.5 L3.5 4 L3.5 5.7 L6.2 5.7 L6.2 3 L4.5 3Z" fill="#666"/></svg>
<div class="r" style="left:43px;top:370px;width:1049px;height:1px;background:#d8d8d8"></div>
<div class="r" style="left:43px;top:372px;width:1049px;height:1px;background:#d8d8d8"></div>
<svg class="r" style="left:71px;top:390px;" width="9" height="13" viewBox="0 0 9 13"><path d="M2 0 L7 0 L7 1 L6.2 1 L6.2 5.5 L8.5 8 L8.5 9 L5 9 L4.5 13 L4 9 L0.5 9 L0.5 8 L2.8 5.5 L2.8 1 L2 1Z" fill="#777"/></svg>
<div class="r" style="left:85px;top:378px;width:473px;height:33px;background:#fff;border:1px solid #cfcfcf;border-radius:2px;box-sizing:border-box"></div>
<div class="t" style="left:96.8px;top:388.20px;font-size:13.7px;line-height:13.7px;color:#505050;font-weight:normal;font-style:normal;">Accounting Distribution Code</div>
<div class="t" style="left:545.5px;top:389.07px;font-size:11.5px;line-height:11.5px;color:#666;font-weight:bold;font-style:normal;">?</div>
<div class="r" style="left:572px;top:378.5px;width:90px;height:20px;border-radius:10px;background:#8bcfba;color:#fff;font-weight:bold;font-size:10.4px;line-height:20px;text-indent:8px">Not counting</div>
<svg class="r" style="left:647px;top:387px;" width="7" height="4" viewBox="0 0 7 4"><path d="M0 0 L7 0 L3.5 4Z" fill="#fff"/></svg>
<div class="r" style="left:663px;top:378.5px;width:80px;height:20px;border-radius:10px;background:#98dbc2;color:#fff;font-weight:bold;font-size:10.4px;line-height:20px;text-align:center">Not grouping</div>
<svg class="r" style="left:840px;top:403px;" width="19" height="10" viewBox="0 0 19 10"><rect x="0.9" y="0.9" width="17.2" height="8.2" fill="#e2dfdc" stroke="#2a2a2a" stroke-width="1.8"/><path d="M2 2 L17 8 M17 2 L2 8" stroke="#a8a4a4" stroke-width="2.4"/><path d="M2 2 L2 8 L9.5 5Z M17 2 L17 8 L9.5 5Z" fill="#cfcbc8"/></svg>
<svg class="r" style="left:900.5px;top:403px;" width="19" height="10" viewBox="0 0 19 10"><rect x="0.9" y="0.9" width="17.2" height="8.2" fill="#e2dfdc" stroke="#2a2a2a" stroke-width="1.8"/><path d="M2 2 L17 8 M17 2 L2 8" stroke="#a8a4a4" stroke-width="2.4"/><path d="M2 2 L2 8 L9.5 5Z M17 2 L17 8 L9.5 5Z" fill="#cfcbc8"/></svg>
<div class="t" style="left:862px;top:402.13px;font-size:12.6px;line-height:12.6px;color:#525c68;font-weight:normal;font-style:normal;text-decoration:underline;text-underline-offset:1px;">Color</div>
<div class="t" style="left:922.2px;top:402.13px;font-size:12.6px;line-height:12.6px;color:#525c68;font-weight:normal;font-style:normal;text-decoration:underline;text-underline-offset:1px;">Background</div>
<svg class="r" style="left:999.5px;top:404.1px;" width="8" height="8" viewBox="0 0 8 8"><path d="M1.2 1.2 L6.8 6.8 M6.8 1.2 L1.2 6.8" stroke="#3a4a6a" stroke-width="2.4"/></svg>
<div class="t" style="left:1008.2px;top:402.13px;font-size:12.6px;line-height:12.6px;color:#525c68;font-weight:normal;font-style:normal;text-decoration:underline;text-underline-offset:1px;">Remove</div>
<svg class="r" style="left:1073px;top:391.8px;" width="14" height="13" viewBox="0 0 14 13"><path d="M7 0 L9.5 3 L7.8 3 L7.8 5.7 L10.5 5.7 L10.5 4 L13.5 6.5 L10.5 9 L10.5 7.3 L7.8 7.3 L7.8 10 L9.5 10 L7 13 L4.5 10 L6.2 10 L6.2 7.3 L3.5 7.3 L3.5 9 L0.5 6.5 L3.5 4 L3.5 5.7 L6.2 5.7 L6.2 3 L4.5 3Z" fill="#666"/></svg>
<div class="r" style="left:43px;top:421px;width:1049px;height:45px;background:#f8f8f8"></div>
<div class="r" style="left:43px;top:418px;width:1049px;height:1px;background:#d8d8d8"></div>
<div class="r" style="left:43px;top:420px;width:1049px;height:1px;background:#d8d8d8"></div>
<svg class="r" style="left:71px;top:438px;" width="9" height="13" viewBox="0 0 9 13"><path d="M2 0 L7 0 L7 1 L6.2 1 L6.2 5.5 L8.5 8 L8.5 9 L5 9 L4.5 13 L4 9 L0.5 9 L0.5 8 L2.8 5.5 L2.8 1 L2 1Z" fill="#777"/></svg>
<div class="r" style="left:85px;top:426px;width:473px;height:33px;background:#fff;border:1px solid #cfcfcf;border-radius:2px;box-sizing:border-box"></div>
<div class="t" style="left:96.8px;top:436.20px;font-size:13.7px;line-height:13.7px;color:#505050;font-weight:normal;font-style:normal;">Accounting Distribution</div>
<div class="t" style="left:545.5px;top:437.07px;font-size:11.5px;line-height:11.5px;color:#666;font-weight:bold;font-style:normal;">?</div>
<div class="r" style="left:572px;top:426.5px;width:90px;height:20px;border-radius:10px;background:#8bcfba;color:#fff;font-weight:bold;font-size:10.4px;line-height:20px;text-indent:8px">Not counting</div>
<svg class="r" style="left:647px;top:435px;" width="7" height="4" viewBox="0 0 7 4"><path d="M0 0 L7 0 L3.5 4Z" fill="#fff"/></svg>
<div class="r" style="left:663px;top:426.5px;width:80px;height:20px;border-radius:10px;background:#98dbc2;color:#fff;font-weight:bold;font-size:10.4px;line-height:20px;text-align:center">Not grouping</div>
<svg class="r" style="left:840px;top:451px;" width="19" height="10" viewBox="0 0 19 10"><rect x="0.9" y="0.9" width="17.2" height="8.2" fill="#e2dfdc" stroke="#2a2a2a" stroke-width="1.8"/><path d="M2 2 L17 8 M17 2 L2 8" stroke="#a8a4a4" stroke-width="2.4"/><path d="M2 2 L2 8 L9.5 5Z M17 2 L17 8 L9.5 5Z" fill="#cfcbc8"/></svg>
<svg class="r" style="left:900.5px;top:451px;" width="19" height="10" viewBox="0 0 19 10"><rect x="0.9" y="0.9" width="17.2" height="8.2" fill="#e2dfdc" stroke="#2a2a2a" stroke-width="1.8"/><path d="M2 2 L17 8 M17 2 L2 8" stroke="#a8a4a4" stroke-width="2.4"/><path d="M2 2 L2 8 L9.5 5Z M17 2 L17 8 L9.5 5Z" fill="#cfcbc8"/></svg>
<div class="t" style="left:862px;top:450.13px;font-size:12.6px;line-height:12.6px;color:#999;font-weight:normal;font-style:normal;text-decoration:underline;text-underline-offset:1px;">Color</div>
<div class="t" style="left:922.2px;top:450.13px;font-size:12.6px;line-height:12.6px;color:#525c68;font-weight:normal;font-style:normal;text-decoration:underline;text-underline-offset:1px;">Background</div>
<svg class="r" style="left:999.5px;top:452.1px;" width="8" height="8" viewBox="0 0 8 8"><path d="M1.2 1.2 L6.8 6.8 M6.8 1.2 L1.2 6.8" stroke="#3a4a6a" stroke-width="2.4"/></svg>
<div class="t" style="left:1008.2px;top:450.13px;font-size:12.6px;line-height:12.6px;color:#525c68;font-weight:normal;font-style:normal;text-decoration:underline;text-underline-offset:1px;">Remove</div>
<svg class="r" style="left:1073px;top:439.8px;" width="14" height="13" viewBox="0 0 14 13"><path d="M7 0 L9.5 3 L7.8 3 L7.8 5.7 L10.5 5.7 L10.5 4 L13.5 6.5 L10.5 9 L10.5 7.3 L7.8 7.3 L7.8 10 L9.5 10 L7 13 L4.5 10 L6.2 10 L6.2 7.3 L3.5 7.3 L3.5 9 L0.5 6.5 L3.5 4 L3.5 5.7 L6.2 5.7 L6.2 3 L4.5 3Z" fill="#666"/></svg>
<div class="r" style="left:43px;top:465px;width:1049px;height:1px;background:#d8d8d8"></div>
<div class="r" style="left:43px;top:467px;width:1049px;height:1px;background:#d8d8d8"></div>
<svg class="r" style="left:71px;top:485px;" width="9" height="13" viewBox="0 0 9 13"><path d="M2 0 L7 0 L7 1 L6.2 1 L6.2 5.5 L8.5 8 L8.5 9 L5 9 L4.5 13 L4 9 L0.5 9 L0.5 8 L2.8 5.5 L2.8 1 L2 1Z" fill="#777"/></svg>
<div class="r" style="left:85px;top:473px;width:473px;height:33px;background:#fff;border:1px solid #cfcfcf;border-radius:2px;box-sizing:border-box"></div>
<div class="t" style="left:96.8px;top:483.20px;font-size:13.7px;line-height:13.7px;color:#505050;font-weight:normal;font-style:normal;">Accounting Facility Code</div>
<div class="t" style="left:545.5px;top:484.07px;font-size:11.5px;line-height:11.5px;color:#666;font-weight:bold;font-style:normal;">?</div>
<div class="r" style="left:572px;top:473.5px;width:90px;height:20px;border-radius:10px;background:#8bcfba;color:#fff;font-weight:bold;font-size:10.4px;line-height:20px;text-indent:8px">Not counting</div>
<svg class="r" style="left:647px;top:482px;" width="7" height="4" viewBox="0 0 7 4"><path d="M0 0 L7 0 L3.5 4Z" fill="#fff"/></svg>
<div class="r" style="left:663px;top:473.5px;width:80px;height:20px;border-radius:10px;background:#98dbc2;color:#fff;font-weight:bold;font-size:10.4px;line-height:20px;text-align:center">Not grouping</div>
<svg class="r" style="left:840px;top:498px;" width="19" height="10" viewBox="0 0 19 10"><rect x="0.9" y="0.9" width="17.2" height="8.2" fill="#e2dfdc" stroke="#2a2a2a" stroke-width="1.8"/><path d="M2 2 L17 8 M17 2 L2 8" stroke="#a8a4a4" stroke-width="2.4"/><path d="M2 2 L2 8 L9.5 5Z M17 2 L17 8 L9.5 5Z" fill="#cfcbc8"/></svg>
<svg class="r" style="left:900.5px;top:498px;" width="19" height="10" viewBox="0 0 19 10"><rect x="0.9" y="0.9" width="17.2" height="8.2" fill="#e2dfdc" stroke="#2a2a2a" stroke-width="1.8"/><path d="M2 2 L17 8 M17 2 L2 8" stroke="#a8a4a4" stroke-width="2.4"/><path d="M2 2 L2 8 L9.5 5Z M17 2 L17 8 L9.5 5Z" fill="#cfcbc8"/></svg>
<div class="t" style="left:862px;top:497.13px;font-size:12.6px;line-height:12.6px;color:#525c68;font-weight:normal;font-style:normal;text-decoration:underline;text-underline-offset:1px;">Color</div>
<div class="t" style="left:922.2px;top:497.13px;font-size:12.6px;line-height:12.6px;color:#525c68;font-weight:normal;font-style:normal;text-decoration:underline;text-underline-offset:1px;">Background</div>
<svg class="r" style="left:999.5px;top:499.1px;" width="8" height="8" viewBox="0 0 8 8"><path d="M1.2 1.2 L6.8 6.8 M6.8 1.2 L1.2 6.8" stroke="#3a4a6a" stroke-width="2.4"/></svg>
<div class="t" style="left:1008.2px;top:497.13px;font-size:12.6px;line-height:12.6px;color:#525c68;font-weight:normal;font-style:normal;text-decoration:underline;text-underline-offset:1px;">Remove</div>
<svg class="r" style="left:1073px;top:486.8px;" width="14" height="13" viewBox="0 0 14 13"><path d="M7 0 L9.5 3 L7.8 3 L7.8 5.7 L10.5 5.7 L10.5 4 L13.5 6.5 L10.5 9 L10.5 7.3 L7.8 7.3 L7.8 10 L9.5 10 L7 13 L4.5 10 L6.2 10 L6.2 7.3 L3.5 7.3 L3.5 9 L0.5 6.5 L3.5 4 L3.5 5.7 L6.2 5.7 L6.2 3 L4.5 3Z" fill="#666"/></svg>
<div class="r" style="left:43px;top:513px;width:1049px;height:1px;background:#d8d8d8"></div>
<div class="r" style="left:43px;top:515px;width:1049px;height:1px;background:#d8d8d8"></div>
<svg class="r" style="left:71px;top:533px;" width="9" height="13" viewBox="0 0 9 13"><path d="M2 0 L7 0 L7 1 L6.2 1 L6.2 5.5 L8.5 8 L8.5 9 L5 9 L4.5 13 L4 9 L0.5 9 L0.5 8 L2.8 5.5 L2.8 1 L2 1Z" fill="#777"/></svg>
<div class="r" style="left:85px;top:521px;width:473px;height:33px;background:#fff;border:1px solid #cfcfcf;border-radius:2px;box-sizing:border-box"></div>
<div class="t" style="left:96.8px;top:531.20px;font-size:13.7px;line-height:13.7px;color:#505050;font-weight:normal;font-style:normal;">Accounting Facility's Description</div>
<div class="t" style="left:545.5px;top:532.07px;font-size:11.5px;line-height:11.5px;color:#666;font-weight:bold;font-style:normal;">?</div>
<div class="r" style="left:572px;top:521.5px;width:90px;height:20px;border-radius:10px;background:#8bcfba;color:#fff;font-weight:bold;font-size:10.4px;line-height:20px;text-indent:8px">Not counting</div>
<svg class="r" style="left:647px;top:530px;" width="7" height="4" viewBox="0 0 7 4"><path d="M0 0 L7 0 L3.5 4Z" fill="#fff"/></svg>
<div class="r" style="left:663px;top:521.5px;width:80px;height:20px;border-radius:10px;background:#98dbc2;color:#fff;font-weight:bold;font-size:10.4px;line-height:20px;text-align:center">Not grouping</div>
<svg class="r" style="left:840px;top:546px;" width="19" height="10" viewBox="0 0 19 10"><rect x="0.9" y="0.9" width="17.2" height="8.2" fill="#e2dfdc" stroke="#2a2a2a" stroke-width="1.8"/><path d="M2 2 L17 8 M17 2 L2 8" stroke="#a8a4a4" stroke-width="2.4"/><path d="M2 2 L2 8 L9.5 5Z M17 2 L17 8 L9.5 5Z" fill="#cfcbc8"/></svg>
<svg class="r" style="left:900.5px;top:546px;" width="19" height="10" viewBox="0 0 19 10"><rect x="0.9" y="0.9" width="17.2" height="8.2" fill="#e2dfdc" stroke="#2a2a2a" stroke-width="1.8"/><path d="M2 2 L17 8 M17 2 L2 8" stroke="#a8a4a4" stroke-width="2.4"/><path d="M2 2 L2 8 L9.5 5Z M17 2 L17 8 L9.5 5Z" fill="#cfcbc8"/></svg>
<div class="t" style="left:862px;top:545.13px;font-size:12.6px;line-height:12.6px;color:#525c68;font-weight:normal;font-style:normal;text-decoration:underline;text-underline-offset:1px;">Color</div>
<div class="t" style="left:922.2px;top:545.13px;font-size:12.6px;line-height:12.6px;color:#525c68;font-weight:normal;font-style:normal;text-decoration:underline;text-underline-offset:1px;">Background</div>
<svg class="r" style="left:999.5px;top:547.0999999999999px;" width="8" height="8" viewBox="0 0 8 8"><path d="M1.2 1.2 L6.8 6.8 M6.8 1.2 L1.2 6.8" stroke="#3a4a6a" stroke-width="2.4"/></svg>
<div class="t" style="left:1008.2px;top:545.13px;font-size:12.6px;line-height:12.6px;color:#525c68;font-weight:normal;font-style:normal;text-decoration:underline;text-underline-offset:1px;">Remove</div>
<svg class="r" style="left:1073px;top:534.8px;" width="14" height="13" viewBox="0 0 14 13"><path d="M7 0 L9.5 3 L7.8 3 L7.8 5.7 L10.5 5.7 L10.5 4 L13.5 6.5 L10.5 9 L10.5 7.3 L7.8 7.3 L7.8 10 L9.5 10 L7 13 L4.5 10 L6.2 10 L6.2 7.3 L3.5 7.3 L3.5 9 L0.5 6.5 L3.5 4 L3.5 5.7 L6.2 5.7 L6.2 3 L4.5 3Z" fill="#666"/></svg>
<div class="r" style="left:43px;top:561px;width:1049px;height:1px;background:#d8d8d8"></div>
<div class="r" style="left:43px;top:563px;width:1049px;height:1px;background:#d8d8d8"></div>
<svg class="r" style="left:71px;top:581px;" width="9" height="13" viewBox="0 0 9 13"><path d="M2 0 L7 0 L7 1 L6.2 1 L6.2 5.5 L8.5 8 L8.5 9 L5 9 L4.5 13 L4 9 L0.5 9 L0.5 8 L2.8 5.5 L2.8 1 L2 1Z" fill="#777"/></svg>
<div class="r" style="left:85px;top:569px;width:473px;height:33px;background:#fff;border:1px solid #cfcfcf;border-radius:2px;box-sizing:border-box"></div>
<div class="t" style="left:96.8px;top:579.20px;font-size:13.7px;line-height:13.7px;color:#505050;font-weight:normal;font-style:normal;">Acct Nbr</div>
<div class="t" style="left:545.5px;top:580.07px;font-size:11.5px;line-height:11.5px;color:#666;font-weight:bold;font-style:normal;">?</div>
<div class="r" style="left:572px;top:569.5px;width:90px;height:20px;border-radius:10px;background:#8bcfba;color:#fff;font-weight:bold;font-size:10.4px;line-height:20px;text-indent:8px">Not counting</div>
<svg class="r" style="left:647px;top:578px;" width="7" height="4" viewBox="0 0 7 4"><path d="M0 0 L7 0 L3.5 4Z" fill="#fff"/></svg>
<div class="r" style="left:663px;top:569.5px;width:80px;height:20px;border-radius:10px;background:#98dbc2;color:#fff;font-weight:bold;font-size:10.4px;line-height:20px;text-align:center">Not grouping</div>
<svg class="r" style="left:840px;top:594px;" width="19" height="10" viewBox="0 0 19 10"><rect x="0.9" y="0.9" width="17.2" height="8.2" fill="#e2dfdc" stroke="#2a2a2a" stroke-width="1.8"/><path d="M2 2 L17 8 M17 2 L2 8" stroke="#a8a4a4" stroke-width="2.4"/><path d="M2 2 L2 8 L9.5 5Z M17 2 L17 8 L9.5 5Z" fill="#cfcbc8"/></svg>
<svg class="r" style="left:900.5px;top:594px;" width="19" height="10" viewBox="0 0 19 10"><rect x="0.9" y="0.9" width="17.2" height="8.2" fill="#e2dfdc" stroke="#2a2a2a" stroke-width="1.8"/><path d="M2 2 L17 8 M17 2 L2 8" stroke="#a8a4a4" stroke-width="2.4"/><path d="M2 2 L2 8 L9.5 5Z M17 2 L17 8 L9.5 5Z" fill="#cfcbc8"/></svg>
<div class="t" style="left:862px;top:593.13px;font-size:12.6px;line-height:12.6px;color:#525c68;font-weight:normal;font-style:normal;text-decoration:underline;text-underline-offset:1px;">Color</div>
<div class="t" style="left:922.2px;top:593.13px;font-size:12.6px;line-height:12.6px;color:#525c68;font-weight:normal;font-style:normal;text-decoration:underline;text-underline-offset:1px;">Background</div>
<svg class="r" style="left:999.5px;top:595.0999999999999px;" width="8" height="8" viewBox="0 0 8 8"><path d="M1.2 1.2 L6.8 6.8 M6.8 1.2 L1.2 6.8" stroke="#3a4a6a" stroke-width="2.4"/></svg>
<div class="t" style="left:1008.2px;top:593.13px;font-size:12.6px;line-height:12.6px;color:#525c68;font-weight:normal;font-style:normal;text-decoration:underline;text-underline-offset:1px;">Remove</div>
<svg class="r" style="left:1073px;top:582.8px;" width="14" height="13" viewBox="0 0 14 13"><path d="M7 0 L9.5 3 L7.8 3 L7.8 5.7 L10.5 5.7 L10.5 4 L13.5 6.5 L10.5 9 L10.5 7.3 L7.8 7.3 L7.8 10 L9.5 10 L7 13 L4.5 10 L6.2 10 L6.2 7.3 L3.5 7.3 L3.5 9 L0.5 6.5 L3.5 4 L3.5 5.7 L6.2 5.7 L6.2 3 L4.5 3Z" fill="#666"/></svg>
<div class="r" style="left:67px;top:372px;width:495px;height:189px;background:#ffff00;mix-blend-mode:multiply"></div>
<svg class="r" style="left:510px;top:279px;" width="36" height="56" viewBox="0 0 36 56"><rect x="4.5" y="4" width="27" height="2.8" fill="#4b0082"/><rect x="4.5" y="48.9" width="27" height="2.8" fill="#4b0082"/><rect x="16.5" y="6" width="3" height="43" fill="#4b0082"/><rect x="13.3" y="6.5" width="1" height="39.5" fill="#3a3a3a"/><rect x="22" y="6.5" width="1" height="39.5" fill="#3a3a3a"/><rect x="1" y="1" width="1" height="9" fill="#222"/><rect x="34" y="1" width="1" height="9" fill="#222"/><rect x="1" y="46" width="1" height="9" fill="#222"/><rect x="34" y="46" width="1" height="9" fill="#222"/><path d="M16.5 1.5 Q18 3.3 19.5 1.5" stroke="#333" stroke-width="0.8" fill="none"/><path d="M16.5 54.5 Q18 52.7 19.5 54.5" stroke="#333" stroke-width="0.8" fill="none"/></svg>
<div class="r" style="left:1092.5px;top:225px;width:8.5px;height:400px;background:#d9d9d9;border-radius:4px"></div>
<div class="r" style="left:1092.5px;top:269px;width:8.5px;height:308px;background:#666;border-radius:4px"></div>
<div class="t" style="left:1129px;top:184.32px;font-size:13.8px;line-height:13.8px;color:#5a5a5a;font-weight:normal;font-style:normal;">Available columns</div>
<div class="r" style="left:1128px;top:222px;width:749px;height:1px;background:#eeeeee"></div>
<div class="r" style="left:1169px;top:258px;width:235px;height:1px;background:#555"></div>
<svg class="r" style="left:1388px;top:243px;" width="13" height="12" viewBox="0 0 13 12"><circle cx="5" cy="5" r="3.9" fill="none" stroke="#777" stroke-width="1.6"/><path d="M8 8 L11.5 11.5" stroke="#777" stroke-width="2" stroke-linecap="round"/></svg>
<div class="r" style="left:1412px;top:239px;width:111px;height:21px;border-radius:10.5px;background:#f2a29c;color:#fff;font-weight:bold;font-size:11px;line-height:21px;text-align:center">Chart of Accounts</div>
<div class="r" style="left:1527px;top:239px;width:91.5px;height:21px;border-radius:10.5px;background:#f5922f;color:#fff;font-weight:bold;font-size:11px;line-height:21px;text-align:center">Codes and IDs</div>
<svg class="r" style="left:1143.5px;top:265.6px;" width="13.5" height="13.5" viewBox="0 0 13.5 13.5"><rect x="0" y="0" width="13.5" height="13.5" rx="2" fill="#2d85c2"/><path d="M2.4 6.6 L5.6 9.5 L11.2 3.9" stroke="#fff" stroke-width="2.5" fill="none"/></svg>
<div class="t" style="left:1170.8px;top:266.90px;font-size:13px;line-height:13px;color:#1e1e1e;font-weight:bold;font-style:normal;">Account Type</div>
<svg class="r" style="left:1171px;top:287.62px;" width="7" height="10" viewBox="0 0 7 10"><path d="M1.2 1 L5.5 5 L1.2 9" stroke="#111" stroke-width="2.2" fill="none"/></svg>
<div class="t" style="left:1183.3px;top:285.62px;font-size:13px;line-height:13px;color:#1e1e1e;font-weight:bold;font-style:normal;">Accounting Contract Info</div>
<svg class="r" style="left:1143.5px;top:303.04px;" width="13.5" height="13.5" viewBox="0 0 13.5 13.5"><rect x="0" y="0" width="13.5" height="13.5" rx="2" fill="#2d85c2"/><path d="M2.4 6.6 L5.6 9.5 L11.2 3.9" stroke="#fff" stroke-width="2.5" fill="none"/></svg>
<div class="t" style="left:1170.8px;top:304.34px;font-size:13px;line-height:13px;color:#1e1e1e;font-weight:bold;font-style:normal;">Accounting Distribution</div>
<svg class="r" style="left:1143.5px;top:321.76px;" width="13.5" height="13.5" viewBox="0 0 13.5 13.5"><rect x="0" y="0" width="13.5" height="13.5" rx="2" fill="#2d85c2"/><path d="M2.4 6.6 L5.6 9.5 L11.2 3.9" stroke="#fff" stroke-width="2.5" fill="none"/></svg>
<div class="t" style="left:1170.8px;top:323.06px;font-size:13px;line-height:13px;color:#1e1e1e;font-weight:bold;font-style:normal;">Accounting Distribution Code</div>
<svg class="r" style="left:1171.5px;top:345.28px;" width="11" height="8" viewBox="0 0 11 8"><path d="M1 1.2 L5.5 6 L10 1.2" stroke="#111" stroke-width="2.2" fill="none"/></svg>
<div class="t" style="left:1187px;top:341.78px;font-size:13px;line-height:13px;color:#1e1e1e;font-weight:bold;font-style:normal;">Accounting Facility</div>
<svg class="r" style="left:1206px;top:362.0px;" width="9.5" height="10" viewBox="0 0 9.5 10"><path d="M0 0 L9.5 0 L5.8 4.5 L5.8 10 L3.7 8.5 L3.7 4.5Z" fill="#111"/></svg>
<div class="t" style="left:1219.4px;top:360.07px;font-size:13.5px;line-height:13.5px;color:#666;font-weight:normal;font-style:italic;">Additional columns:</div>
<div class="r" style="left:1341.5px;top:361.20000000000005px;width:44.5px;height:13px;border-radius:6.5px;background:#f3e6a0;color:#fff;font-weight:bold;font-size:8.5px;line-height:13px;text-align:center">Auditing</div>
<div class="r" style="left:1392px;top:361.20000000000005px;width:72px;height:13px;border-radius:6.5px;background:#f5922f;color:#fff;font-weight:bold;font-size:9px;line-height:13px;text-align:center">Codes and IDs</div>
<svg class="r" style="left:1205.8px;top:377.92px;" width="13.5" height="13.5" viewBox="0 0 13.5 13.5"><rect x="0" y="0" width="13.5" height="13.5" rx="2" fill="#2d85c2"/><path d="M2.4 6.6 L5.6 9.5 L11.2 3.9" stroke="#fff" stroke-width="2.5" fill="none"/></svg>
<div class="t" style="left:1232px;top:379.22px;font-size:13px;line-height:13px;color:#1e1e1e;font-weight:bold;font-style:normal;">Accounting Facility Code</div>
<div class="r" style="left:1390.5px;top:379.12px;width:72.5px;height:14px;border-radius:7px;background:#f5922f;color:#fff;font-weight:bold;font-size:9px;line-height:14px;text-align:center">Codes and IDs</div>
<svg class="r" style="left:1205.8px;top:396.64px;" width="13.5" height="13.5" viewBox="0 0 13.5 13.5"><rect x="0" y="0" width="13.5" height="13.5" rx="2" fill="#2d85c2"/><path d="M2.4 6.6 L5.6 9.5 L11.2 3.9" stroke="#fff" stroke-width="2.5" fill="none"/></svg>
<div class="t" style="left:1232px;top:397.94px;font-size:13px;line-height:13px;color:#1e1e1e;font-weight:bold;font-style:normal;">Description</div>
<svg class="r" style="left:1143.5px;top:415.36px;" width="13.5" height="13.5" viewBox="0 0 13.5 13.5"><rect x="0" y="0" width="13.5" height="13.5" rx="2" fill="#8fc4e6"/></svg>
<div class="t" style="left:1170.8px;top:416.66px;font-size:13px;line-height:13px;color:#1e1e1e;font-weight:bold;font-style:normal;">Accounting Trans Id</div>
<svg class="r" style="left:1143.5px;top:434.08000000000004px;" width="13.5" height="13.5" viewBox="0 0 13.5 13.5"><rect x="0" y="0" width="13.5" height="13.5" rx="2" fill="#8fc4e6"/></svg>
<div class="t" style="left:1170.8px;top:435.38px;font-size:13px;line-height:13px;color:#1e1e1e;font-weight:bold;font-style:normal;">Adjustment Type</div>
<svg class="r" style="left:1143.5px;top:452.8px;" width="13.5" height="13.5" viewBox="0 0 13.5 13.5"><rect x="0" y="0" width="13.5" height="13.5" rx="2" fill="#2d85c2"/><path d="M2.4 6.6 L5.6 9.5 L11.2 3.9" stroke="#fff" stroke-width="2.5" fill="none"/></svg>
<div class="t" style="left:1170.8px;top:454.10px;font-size:13px;line-height:13px;color:#1e1e1e;font-weight:bold;font-style:normal;">Adjustment Type Description</div>
<svg class="r" style="left:1143.5px;top:471.52px;" width="13.5" height="13.5" viewBox="0 0 13.5 13.5"><rect x="0" y="0" width="13.5" height="13.5" rx="2" fill="#8fc4e6"/></svg>
<div class="t" style="left:1170.8px;top:472.82px;font-size:13px;line-height:13px;color:#1e1e1e;font-weight:bold;font-style:normal;">Alias Business Associate Number</div>
<svg class="r" style="left:1143.5px;top:490.24px;" width="13.5" height="13.5" viewBox="0 0 13.5 13.5"><rect x="0" y="0" width="13.5" height="13.5" rx="2" fill="#2d85c2"/><path d="M2.4 6.6 L5.6 9.5 L11.2 3.9" stroke="#fff" stroke-width="2.5" fill="none"/></svg>
<div class="t" style="left:1170.8px;top:491.54px;font-size:13px;line-height:13px;color:#1e1e1e;font-weight:bold;font-style:normal;">Amount Dollar Round</div>
<svg class="r" style="left:1143.5px;top:508.96000000000004px;" width="13.5" height="13.5" viewBox="0 0 13.5 13.5"><rect x="0" y="0" width="13.5" height="13.5" rx="2" fill="#8fc4e6"/></svg>
<div class="t" style="left:1170.8px;top:510.26px;font-size:13px;line-height:13px;color:#1e1e1e;font-weight:bold;font-style:normal;">Balanced Energy</div>
<svg class="r" style="left:1143.5px;top:527.6800000000001px;" width="13.5" height="13.5" viewBox="0 0 13.5 13.5"><rect x="0" y="0" width="13.5" height="13.5" rx="2" fill="#8fc4e6"/></svg>
<div class="t" style="left:1170.8px;top:528.98px;font-size:13px;line-height:13px;color:#1e1e1e;font-weight:bold;font-style:normal;">Base Currency Indicator</div>
<svg class="r" style="left:1143.5px;top:546.4px;" width="13.5" height="13.5" viewBox="0 0 13.5 13.5"><rect x="0" y="0" width="13.5" height="13.5" rx="2" fill="#8fc4e6"/></svg>
<div class="t" style="left:1170.8px;top:547.70px;font-size:13px;line-height:13px;color:#1e1e1e;font-weight:bold;font-style:normal;">Book Id</div>
<svg class="r" style="left:1143.5px;top:565.12px;" width="13.5" height="13.5" viewBox="0 0 13.5 13.5"><rect x="0" y="0" width="13.5" height="13.5" rx="2" fill="#8fc4e6"/></svg>
<div class="t" style="left:1170.8px;top:566.42px;font-size:13px;line-height:13px;color:#1e1e1e;font-weight:bold;font-style:normal;">Book Indicator</div>
<svg class="r" style="left:1143.5px;top:583.84px;" width="13.5" height="13.5" viewBox="0 0 13.5 13.5"><rect x="0" y="0" width="13.5" height="13.5" rx="2" fill="#2d85c2"/><path d="M2.4 6.6 L5.6 9.5 L11.2 3.9" stroke="#fff" stroke-width="2.5" fill="none"/></svg>
<div class="t" style="left:1170.8px;top:585.14px;font-size:13px;line-height:13px;color:#1e1e1e;font-weight:bold;font-style:normal;">Book Month</div>
<svg class="r" style="left:1171px;top:605.8599999999999px;" width="7" height="10" viewBox="0 0 7 10"><path d="M1.2 1 L5.5 5 L1.2 9" stroke="#111" stroke-width="2.2" fill="none"/></svg>
<div class="t" style="left:1183.3px;top:603.86px;font-size:13px;line-height:13px;color:#1e1e1e;font-weight:bold;font-style:normal;">Book Month Data Information</div>
<div class="r" style="left:1132px;top:300px;width:355px;height:116px;background:#ffff00;mix-blend-mode:multiply"></div>
<div class="r" style="left:1868px;top:228px;width:9px;height:400px;background:#d9d9d9;border-radius:4.5px"></div>
<div class="r" style="left:1868px;top:228px;width:9px;height:232px;background:#666;border-radius:4.5px"></div>
</div>
</body></html>
